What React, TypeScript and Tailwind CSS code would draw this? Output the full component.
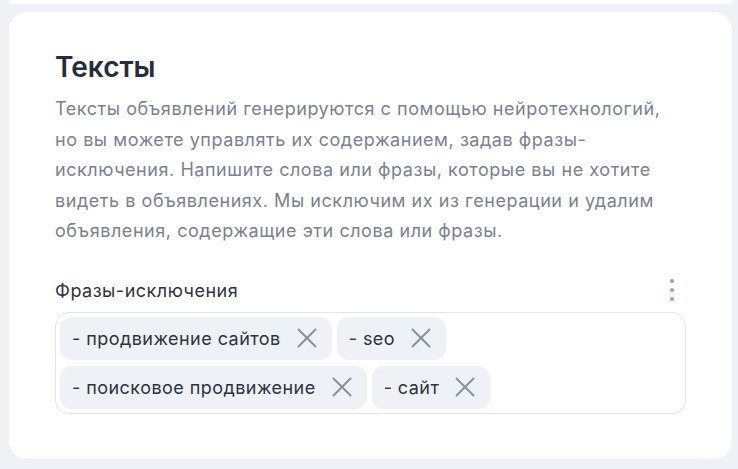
const phrases = ["- продвижение сайтов", "- seo", "- поисковое продвижение", "- сайт"];

const Cross = () => (
  <svg width="20" height="20" viewBox="0 0 20 20" fill="none" stroke="#8b919d" strokeWidth="2" strokeLinecap="round">
    <path d="M1.5 1.5l17 17M18.5 1.5l-17 17" />
  </svg>
);

const Chip = ({ text }: { text: string }) => (
  <div className="flex h-[43px] items-center gap-[16px] rounded-[12px] bg-[#eef1f6] pl-[12px] pr-[15px]">
    <span className="text-[18px] tracking-[0.45px] text-[#2e3340]">{text}</span>
    <Cross />
  </div>
);

export default function App() {
  return (
    <div className="min-h-[469px] bg-[#eef1f5] pl-[9px] pr-[6px] pb-[9px]" style={{ fontFamily: "Inter, 'Noto Sans', sans-serif" }}>
      <div className="h-[4px] rounded-b-[12px] bg-white" />
      <div className="mt-[8px] rounded-[18px] bg-white pl-[46px] pr-[46px] pt-[38px] pb-[45px]">
        <h2 className="text-[28px] font-semibold leading-[34px] text-[#272d3a]">Тексты</h2>
        <p className="mt-[10px] text-[18px] leading-[30.5px] tracking-[0.55px] text-[#7a8190]">
          Тексты объявлений генерируются с помощью нейротехнологий, но вы можете управлять их содержанием, задав фразы-исключения. Напишите слова или фразы, которые вы не хотите видеть в объявлениях. Мы исключим их из генерации и удалим объявления, содержащие эти слова или фразы.
        </p>
        <div className="mt-[30px] flex items-center justify-between">
          <span className="text-[18px] tracking-[0.5px] text-[#2e3340]">Фразы-исключения</span>
          <div className="mr-[12px] flex flex-col gap-[5px]">
            <span className="h-[4px] w-[4px] rounded-full bg-[#9aa0ab]" />
            <span className="h-[4px] w-[4px] rounded-full bg-[#9aa0ab]" />
            <span className="h-[4px] w-[4px] rounded-full bg-[#9aa0ab]" />
          </div>
        </div>
        <div className="mt-[8px] flex flex-wrap gap-x-[5px] gap-y-[6px] rounded-[14px] border border-[#e3e5ea] p-[4px]">
          {phrases.map((p) => (
            <Chip key={p} text={p} />
          ))}
        </div>
      </div>
    </div>
  );
}
